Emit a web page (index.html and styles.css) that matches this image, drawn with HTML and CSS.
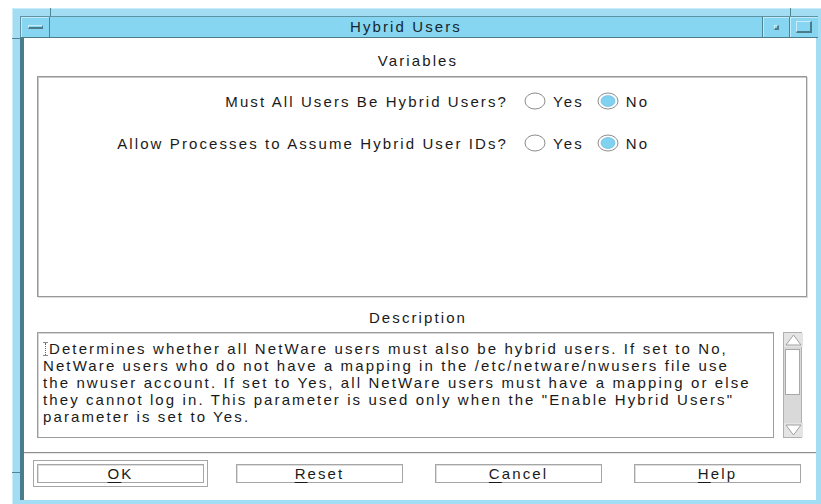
FILE: index.html
```html
<!DOCTYPE html>
<html lang="en">
<head>
<meta charset="utf-8">
<title>Hybrid Users</title>
<link rel="stylesheet" href="styles.css">
</head>
<body>
<div class="window">
  <span class="grip grip-top-left"></span>
  <span class="grip grip-top-right"></span>
  <span class="grip grip-left-top"></span>
  <span class="grip grip-left-bottom"></span>

  <div class="titlebar">
    <div class="tb-btn tb-menu"><span class="dash"></span></div>
    <div class="title">Hybrid Users</div>
    <div class="tb-btn tb-min"><span class="dot"></span></div>
    <div class="tb-btn tb-max"><span class="square"></span></div>
  </div>

  <div class="client">
    <div class="section-label">Variables</div>
    <div class="group">
      <div class="row">
        <span class="question">Must All Users Be Hybrid Users?</span>
        <label class="radio">
          <svg class="radio-mark" width="22" height="18" viewBox="0 0 22 18"><ellipse cx="11" cy="9" rx="10" ry="8" fill="#fff" stroke="#8c8c8c"/></svg>
          <span>Yes</span>
        </label>
        <label class="radio">
          <svg class="radio-mark" width="22" height="18" viewBox="0 0 22 18"><ellipse cx="11" cy="9" rx="10" ry="8" fill="#fff" stroke="#8c8c8c"/><ellipse cx="11" cy="9" rx="7" ry="5.5" fill="#80d2f1" stroke="#5fb4d6" stroke-width="0.6"/></svg>
          <span>No</span>
        </label>
      </div>
      <div class="row">
        <span class="question">Allow Processes to Assume Hybrid User IDs?</span>
        <label class="radio">
          <svg class="radio-mark" width="22" height="18" viewBox="0 0 22 18"><ellipse cx="11" cy="9" rx="10" ry="8" fill="#fff" stroke="#8c8c8c"/></svg>
          <span>Yes</span>
        </label>
        <label class="radio">
          <svg class="radio-mark" width="22" height="18" viewBox="0 0 22 18"><ellipse cx="11" cy="9" rx="10" ry="8" fill="#fff" stroke="#8c8c8c"/><ellipse cx="11" cy="9" rx="7" ry="5.5" fill="#80d2f1" stroke="#5fb4d6" stroke-width="0.6"/></svg>
          <span>No</span>
        </label>
      </div>
    </div>

    <div class="section-label section-label-desc">Description</div>
    <div class="desc-area">
      <div class="desc">
        <span class="caret"></span>Determines whether all NetWare users must also be hybrid users. If set to No,<br>
        NetWare users who do not have a mapping in the /etc/netware/nwusers file use<br>
        the nwuser account. If set to Yes, all NetWare users must have a mapping or else<br>
        they cannot log in. This parameter is used only when the "Enable Hybrid Users"<br>
        parameter is set to Yes.
      </div>
      <div class="scrollbar">
        <svg class="arrow" width="19" height="14" viewBox="0 0 19 14"><polygon points="9.5,2 17,12 2,12" fill="#fff" stroke="#a0a0a0"/></svg>
        <div class="thumb"></div>
        <div class="trough"></div>
        <svg class="arrow" width="19" height="14" viewBox="0 0 19 14"><polygon points="2,2 17,2 9.5,12" fill="#fff" stroke="#a0a0a0"/></svg>
      </div>
    </div>

    <div class="separator"></div>

    <div class="buttons">
      <button class="btn btn-default"><u>O</u>K</button>
      <button class="btn"><u>R</u>eset</button>
      <button class="btn"><u>C</u>ancel</button>
      <button class="btn"><u>H</u>elp</button>
    </div>
  </div>
</div>
</body>
</html>
```

FILE: styles.css
```css
* {
  box-sizing: border-box;
}

body {
  margin: 0;
  background: #ffffff;
  font-family: "Liberation Sans", Arial, sans-serif;
  font-size: 15px;
  letter-spacing: 2.1px;
  color: #1a1a1a;
}

/* window frame */
.window {
  position: relative;
  margin: 8px 0 0 12px;
  width: 809px;
  height: 496px;
  display: flex;
  flex-direction: column;
  padding: 8px 3px 4px 8px;
  background: #a2ddf3;
  box-shadow: inset 1px 1px #c9eefb;
}

.grip {
  position: absolute;
  background: #4f8494;
}

.grip-top-left {
  left: 38px;
  top: 0;
  width: 1px;
  height: 8px;
}

.grip-top-right {
  left: 778px;
  top: 0;
  width: 1px;
  height: 8px;
}

.grip-left-top {
  left: 0;
  top: 30px;
  width: 8px;
  height: 1px;
}

.grip-left-bottom {
  left: 0;
  top: 464px;
  width: 8px;
  height: 1px;
}

/* title bar */
.titlebar {
  display: flex;
  height: 22px;
  background: #86d5f1;
  border-bottom: 1px solid #4a7c8c;
  border-top: 1px solid #5f93a3;
  border-left: 1px solid #5f93a3;
}

.tb-btn {
  display: flex;
  align-items: center;
  justify-content: center;
  width: 29px;
  box-shadow: inset 1px 1px #c2ebfa;
}

.tb-menu {
  border-right: 1px solid #4f8494;
}

.tb-min {
  border-left: 1px solid #4f8494;
  border-right: 1px solid #4f8494;
  width: 28px;
}

.tb-max {
  width: 28px;
}

.dash {
  width: 15px;
  height: 4px;
  background: #86d5f1;
  border-top: 1px solid #c9eefb;
  border-left: 1px solid #c9eefb;
  border-bottom: 2px solid #4a7c8c;
  border-right: 1px solid #4a7c8c;
}

.dot {
  width: 5px;
  height: 5px;
  background: #86d5f1;
  border-top: 1px solid #c9eefb;
  border-left: 1px solid #c9eefb;
  border-bottom: 2px solid #4a7c8c;
  border-right: 2px solid #4a7c8c;
}

.square {
  width: 16px;
  height: 12px;
  border-top: 1px solid #c9eefb;
  border-left: 1px solid #c9eefb;
  border-bottom: 2px solid #4a7c8c;
  border-right: 2px solid #4a7c8c;
}

.title {
  flex: 1;
  text-align: center;
  line-height: 19px;
  color: #16262c;
}

/* client area */
.client {
  flex: 1;
  display: flex;
  flex-direction: column;
  background: #ffffff;
  border-left: 4px solid #4a7c8c;
  border-right: 2px solid #a2ddf3;
}

.section-label {
  text-align: center;
  line-height: 17px;
  padding: 14px 0 7px;
  margin-left: -4px;
}

.section-label-desc {
  padding: 12px 0 6px;
}

.group {
  margin: 0 9px 0 13px;
  height: 221px;
  border: 1px solid #999999;
  box-shadow: inset 1px 1px #c6c6c6, 1px 1px #dcdcdc;
  padding-top: 14px;
  display: flex;
  flex-direction: column;
  gap: 22px;
}

.row {
  display: flex;
  align-items: center;
  height: 20px;
}

.question {
  width: 486px;
  padding-right: 16px;
  text-align: right;
  white-space: nowrap;
}

.radio {
  display: flex;
  align-items: center;
  gap: 7px;
  margin-right: 13px;
}

.radio-mark {
  display: block;
}

/* description */
.desc-area {
  display: flex;
  gap: 9px;
  margin: 0 0 0 13px;
  height: 106px;
}

.desc {
  width: 737px;
  border: 1px solid #9c9c9c;
  box-shadow: inset 1px 1px #d6d6d6;
  padding: 7px 0 0 5px;
  line-height: 17px;
  white-space: nowrap;
}

/* text insertion cursor */
.caret {
  display: inline-block;
  position: relative;
  width: 5px;
  height: 14px;
  margin: 0 1px -2px 0;
  border-top: 1px solid #8a8a8a;
  border-bottom: 1px solid #8a8a8a;
}

.caret::after {
  content: "";
  position: absolute;
  left: 2px;
  top: 0;
  bottom: 0;
  border-left: 1px dotted #666;
}

.scrollbar {
  width: 19px;
  display: flex;
  flex-direction: column;
  background: #d9d9d9;
  border: 1px solid #b0b0b0;
}

.arrow {
  display: block;
  background: #e4e4e4;
}

.thumb {
  height: 46px;
  margin: 2px 1px 0;
  background: #ffffff;
  border: 1px solid #a8a8a8;
}

.trough {
  flex: 1;
}

.separator {
  margin-top: 14px;
  height: 2px;
  border-top: 1px solid #8e8e8e;
  border-bottom: 1px solid #e6e6e6;
}

.buttons {
  display: grid;
  grid-template-columns: repeat(4, 167px);
  column-gap: 32px;
  padding-left: 13px;
  margin-top: 10px;
}

.btn {
  height: 19px;
  padding: 0;
  font: inherit;
  letter-spacing: 2.1px;
  color: #1a1a1a;
  background: #ffffff;
  border: 1px solid #a6a6a6;
  box-shadow: inset 1px 1px #dedede;
  line-height: 17px;
}

.btn u {
  text-underline-offset: 3px;
  text-decoration-thickness: 1px;
}

.btn-default {
  outline: 1px solid #a6a6a6;
  outline-offset: 3px;
}
```
